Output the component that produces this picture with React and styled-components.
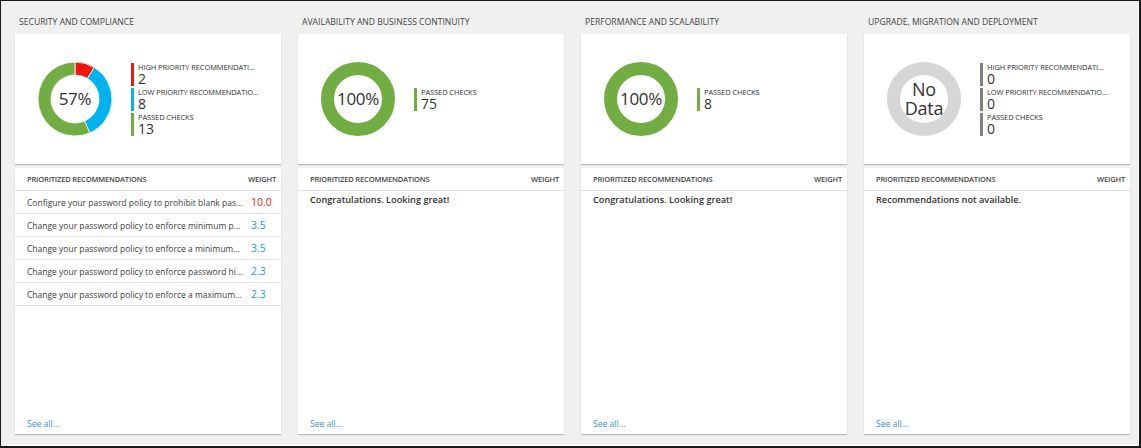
import React from "react"
import styled, { createGlobalStyle } from "styled-components"

const GlobalStyle = createGlobalStyle`
  html, body {
    margin: 0;
    padding: 0;
    background: #ffffff;
  }
  body {
    font-family: "Open Sans", "Noto Sans", sans-serif;
    color: #333333;
  }
`

const RED = "#f2150f"
const BLUE = "#00b3ef"
const GREEN = "#72ad44"
const GREY = "#d6d6d6"
const GREY_BAR = "#808080"

const sections = [
  {
    title: "Security and compliance",
    center: "57%",
    segments: [
      { value: 2, color: RED },
      { value: 8, color: BLUE },
      { value: 13, color: GREEN },
    ],
    legend: [
      { label: "HIGH PRIORITY RECOMMENDATI...", value: "2", color: RED },
      { label: "LOW PRIORITY RECOMMENDATIO...", value: "8", color: BLUE },
      { label: "PASSED CHECKS", value: "13", color: GREEN },
    ],
    rows: [
      { text: "Configure your password policy to prohibit blank pas...", weight: "10.0", high: true },
      { text: "Change your password policy to enforce minimum p...", weight: "3.5" },
      { text: "Change your password policy to enforce a minimum...", weight: "3.5" },
      { text: "Change your password policy to enforce password hi...", weight: "2.3" },
      { text: "Change your password policy to enforce a maximum...", weight: "2.3" },
    ],
  },
  {
    title: "Availability and business continuity",
    center: "100%",
    segments: [{ value: 1, color: GREEN }],
    legend: [{ label: "PASSED CHECKS", value: "75", color: GREEN }],
    message: "Congratulations. Looking great!",
  },
  {
    title: "Performance and scalability",
    center: "100%",
    segments: [{ value: 1, color: GREEN }],
    legend: [{ label: "PASSED CHECKS", value: "8", color: GREEN }],
    message: "Congratulations. Looking great!",
  },
  {
    title: "Upgrade, migration and deployment",
    center: "No Data",
    segments: [{ value: 1, color: GREY }],
    legend: [
      { label: "HIGH PRIORITY RECOMMENDATI...", value: "0", color: GREY_BAR },
      { label: "LOW PRIORITY RECOMMENDATIO...", value: "0", color: GREY_BAR },
      { label: "PASSED CHECKS", value: "0", color: GREY_BAR },
    ],
    message: "Recommendations not available.",
  },
]

const SIZE = 76
const C = SIZE / 2
const R_OUT = 37
const R_IN = 24

const pt = (r, a) => {
  const rad = (a * Math.PI) / 180
  return `${(C + r * Math.sin(rad)).toFixed(2)} ${(C - r * Math.cos(rad)).toFixed(2)}`
}

const arc = (a0, a1) => {
  const large = a1 - a0 > 180 ? 1 : 0
  return `M ${pt(R_OUT, a0)} A ${R_OUT} ${R_OUT} 0 ${large} 1 ${pt(R_OUT, a1)} L ${pt(R_IN, a1)} A ${R_IN} ${R_IN} 0 ${large} 0 ${pt(R_IN, a0)} Z`
}

const Donut = ({ segments, center }) => {
  const total = segments.reduce((s, x) => s + x.value, 0)
  let start = 0
  return (
    <DonutBox>
      <svg width={SIZE} height={SIZE} viewBox={`0 0 ${SIZE} ${SIZE}`}>
        {segments.length === 1 ? (
          <circle
            cx={C}
            cy={C}
            r={(R_OUT + R_IN) / 2}
            fill="none"
            stroke={segments[0].color}
            strokeWidth={R_OUT - R_IN}
          />
        ) : (
          segments.map((s, i) => {
            const end = start + (s.value / total) * 360
            const d = arc(start, end)
            start = end
            return <path key={i} d={d} fill={s.color} stroke="#ffffff" strokeWidth="0.8" />
          })
        )}
      </svg>
      <DonutLabel small={center.length > 4}>{center}</DonutLabel>
    </DonutBox>
  )
}

const App = () => {
  return (
    <>
      <GlobalStyle />
      <Frame>
        <Board>
          {sections.map((sec, key) => (
            <Column key={`col_${key}`}>
              <Title>{sec.title}</Title>
              <ChartCard>
                <Donut segments={sec.segments} center={sec.center} />
                <Legend>
                  {sec.legend.map((item, i) => (
                    <LegendItem key={i} color={item.color}>
                      <LegendLabel>{item.label}</LegendLabel>
                      <LegendValue>{item.value}</LegendValue>
                    </LegendItem>
                  ))}
                </Legend>
              </ChartCard>
              <RecCard>
                <RecHeader>
                  <span>Prioritized recommendations</span>
                  <span>Weight</span>
                </RecHeader>
                {sec.rows ? (
                  sec.rows.map((row, i) => (
                    <RecRow key={i}>
                      <RecText>{row.text}</RecText>
                      <Weight high={row.high}>{row.weight}</Weight>
                    </RecRow>
                  ))
                ) : (
                  <Message>{sec.message}</Message>
                )}
                <SeeAll href="#">See all...</SeeAll>
              </RecCard>
            </Column>
          ))}
        </Board>
      </Frame>
    </>
  )
}

export default App

const Frame = styled.div`
  width: 1141px;
  height: 448px;
  box-sizing: border-box;
  border-top: 1px solid #1a1a1a;
  border-left: 1px solid #1a1a1a;
  border-right: 2px solid #1a1a1a;
  border-bottom: 2px solid #1a1a1a;
  background: #ffffff;
`

const Board = styled.div`
  height: 100%;
  box-sizing: border-box;
  display: flex;
  gap: 17px;
  padding: 0 0 0 14px;
  background: #f0f0f0;
  border-right: 1px solid #ffffff;
  border-bottom: 1px solid #ffffff;
`

const Column = styled.div`
  width: 266px;
  display: flex;
  flex-direction: column;
`

const Title = styled.div`
  height: 33px;
  box-sizing: border-box;
  padding: 15px 0 0 4px;
  font-size: 8.6px;
  line-height: 12px;
  text-transform: uppercase;
  color: #444444;
  white-space: nowrap;
`

const Card = styled.div`
  background: #ffffff;
  box-shadow: 0 1px 1px rgba(0, 0, 0, 0.22);
`

const ChartCard = styled(Card)`
  height: 130px;
  display: flex;
  align-items: center;
  padding-left: 22px;
  gap: 18px;
`

const DonutBox = styled.div`
  display: grid;
  place-items: center;
  width: ${SIZE}px;
  height: ${SIZE}px;
  & > * {
    grid-area: 1 / 1;
  }
`

const DonutLabel = styled.div`
  font-size: ${({ small }) => (small ? "18px" : "17px")};
  line-height: ${({ small }) => (small ? "19px" : "20px")};
  width: ${({ small }) => (small ? "40px" : "auto")};
  text-align: center;
  color: #333333;
  letter-spacing: -0.3px;
`

const Legend = styled.div`
  display: flex;
  flex-direction: column;
  gap: 2px;
  min-width: 0;
`

const LegendItem = styled.div`
  display: flex;
  flex-direction: column;
  justify-content: center;
  height: 23px;
  border-left: 3px solid ${({ color }) => color};
  padding-left: 4px;
`

const LegendLabel = styled.div`
  font-size: 7.5px;
  line-height: 9px;
  color: #333333;
  white-space: nowrap;
  letter-spacing: -0.1px;
`

const LegendValue = styled.div`
  font-size: 14px;
  line-height: 14px;
  color: #333333;
`

const RecCard = styled(Card)`
  margin-top: 4px;
  height: 266px;
  display: flex;
  flex-direction: column;
`

const RecHeader = styled.div`
  height: 22px;
  display: flex;
  align-items: center;
  justify-content: space-between;
  padding: 0 5px 0 12px;
  border-bottom: 1px solid #e2e2e2;
  font-size: 7.5px;
  font-weight: 600;
  text-transform: uppercase;
  color: #444444;
  letter-spacing: -0.15px;
`

const RecRow = styled.div`
  height: 22px;
  display: flex;
  align-items: center;
  padding: 0 0 0 12px;
  border-bottom: 1px solid #e2e2e2;
`

const RecText = styled.div`
  width: 224px;
  font-size: 8.5px;
  color: #404040;
  white-space: nowrap;
  overflow: hidden;
`

const Weight = styled.div`
  font-size: 10.5px;
  color: ${({ high }) => (high ? "#ee1b1b" : "#1b9de0")};
`

const Message = styled.div`
  padding: 2px 12px;
  font-size: 9.2px;
  font-weight: 600;
  color: #333333;
  line-height: 14px;
`

const SeeAll = styled.a`
  margin-top: auto;
  padding: 0 0 3px 12px;
  font-size: 8.6px;
  line-height: 13px;
  color: #3593d6;
  text-decoration: none;
`
